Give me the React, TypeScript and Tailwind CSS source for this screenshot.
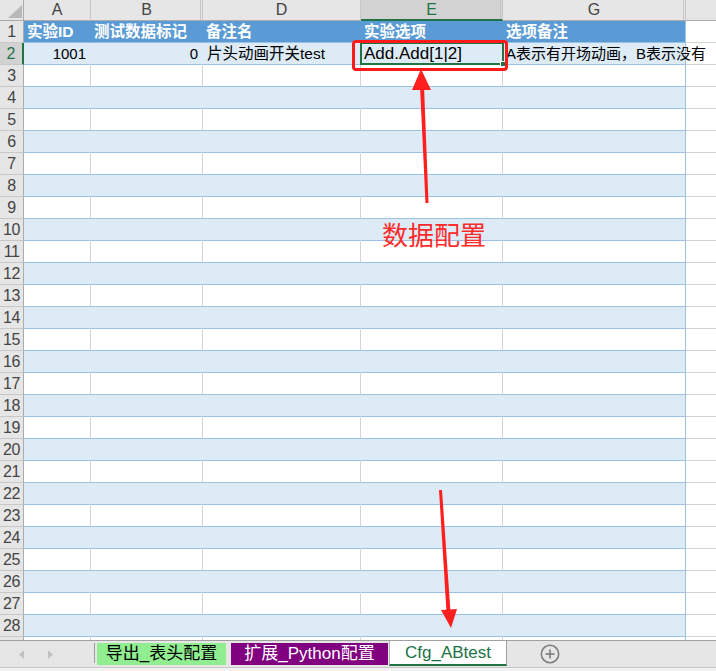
import React from 'react';

type ColDef = { key: string; w: string };

const COLS: ColDef[] = [
  { key: 'A', w: 'w-[67px]' },
  { key: 'B', w: 'w-[112px]' },
  { key: 'D', w: 'w-[158px]' },
  { key: 'E', w: 'w-[142px]' },
  { key: 'G', w: 'w-[183px]' },
];

const HEADERS = ['实验ID', '测试数据标记', '备注名', '实验选项', '选项备注'];

function ColHeader() {
  return (
    <div className="flex h-[21px] bg-[#e6e6e6] text-[16px] text-[#444]">
      <div className="relative w-[24px] h-[21px] border-r border-b border-[#ababab]">
        <svg className="absolute left-0 top-0" width="24" height="21">
          <polygon points="22,5 22,18 8,18" fill="#b8b8b8" />
        </svg>
      </div>
      <div className="w-[67px] h-[21px] border-r border-r-[#c6c6c6] border-b border-b-[#ababab] flex items-center justify-center">A</div>
      <div className="w-[112px] h-[21px] border-r border-r-[#c6c6c6] border-b border-b-[#ababab] flex items-center justify-center shadow-[inset_-1px_0_0_#e6e6e6,inset_-2px_0_0_#c6c6c6]">B</div>
      <div className="w-[158px] h-[21px] border-r border-r-[#c6c6c6] border-b border-b-[#ababab] flex items-center justify-center">D</div>
      <div className="w-[142px] h-[21px] bg-[#d2d2d2] text-[#217346] border-r border-r-[#c6c6c6] border-b-2 border-b-[#217346] flex items-center justify-center shadow-[inset_-1px_0_0_#d2d2d2,inset_-2px_0_0_#c6c6c6]">E</div>
      <div className="w-[183px] h-[21px] border-r border-r-[#c6c6c6] border-b border-b-[#ababab] flex items-center justify-center shadow-[inset_-1px_0_0_#e6e6e6,inset_-2px_0_0_#c6c6c6]">G</div>
      <div className="flex-1 h-[21px] border-b border-b-[#ababab]" />
    </div>
  );
}

function RowHeader({ n, selected }: { n: number; selected?: boolean }) {
  if (selected) {
    return (
      <div className="w-[24px] h-[22px] bg-[#d2d2d2] border-r-2 border-r-[#217346] border-b border-b-[#c8c8c8] flex items-center justify-center text-[16px] text-[#217346] leading-none">
        {n}
      </div>
    );
  }
  return (
    <div className="w-[24px] h-[22px] bg-[#e6e6e6] border-r border-r-[#ababab] border-b border-b-[#c8c8c8] flex items-center justify-center text-[16px] text-[#444] leading-none tracking-[-0.5px] overflow-hidden">
      {n}
    </div>
  );
}

function HeaderRow() {
  return (
    <div className="flex h-[22px]">
      <RowHeader n={1} />
      {COLS.map((c, i) => (
        <div
          key={c.key}
          className={
            c.w +
            ' h-[22px] bg-[#5b9bd5] border-b border-b-[#9bc2e6] ' +
            (i === 4 ? 'border-r border-r-[#9bc2e6]' : 'border-r border-r-[#5b9bd5]') +
            ' pl-[3px] text-[15.5px] font-bold text-white leading-[21px] whitespace-nowrap overflow-hidden'
          }
        >
          {HEADERS[i]}
        </div>
      ))}
      <div className="flex-1 h-[22px] border-b border-b-[#d4d4d4] bg-white" />
    </div>
  );
}

function DataRow2() {
  const base = 'h-[22px] bg-[#ddebf7] border-b border-b-[#9bc2e6] border-r leading-[21px] whitespace-nowrap text-black';
  return (
    <div className="flex h-[22px]">
      <RowHeader n={2} selected />
      <div className={'w-[67px] ' + base + ' border-r-[#ddebf7] text-right pr-[4px] text-[15px]'}>1001</div>
      <div className={'w-[112px] ' + base + ' border-r-[#ddebf7] text-right pr-[4px] text-[15px]'}>0</div>
      <div className={'w-[158px] ' + base + ' border-r-[#ddebf7] pl-[4px] text-[15.5px] overflow-hidden'}>片头动画开关test</div>
      <div className={'w-[142px] ' + base + ' border-r-[#ddebf7] pl-[3px] text-[17px] overflow-hidden'}>Add.Add[1|2]</div>
      <div className={'w-[183px] ' + base + ' border-r-[#9bc2e6] pl-[3px] text-[15px] relative z-10'}>
        A表示有开场动画，B表示没有
      </div>
      <div className="flex-1 h-[22px] border-b border-b-[#d4d4d4] bg-white" />
    </div>
  );
}

function EmptyRow({ n }: { n: number }) {
  const even = n % 2 === 0;
  return (
    <div className="flex h-[22px]">
      <RowHeader n={n} />
      {COLS.map((c, i) => (
        <div
          key={c.key}
          className={
            c.w +
            ' h-[22px] border-b border-b-[#9bc2e6] border-r ' +
            (even ? 'bg-[#ddebf7] ' : 'bg-white ') +
            (i === 4 ? 'border-r-[#9bc2e6]' : even ? 'border-r-[#ddebf7]' : 'border-r-[#d4d4d4]')
          }
        />
      ))}
      <div className="flex-1 h-[22px] border-b border-b-[#d4d4d4] bg-white" />
    </div>
  );
}

function PartialRow() {
  return (
    <div className="flex h-[3px] overflow-hidden">
      <div className="w-[24px] h-[3px] bg-[#e6e6e6] border-r border-r-[#ababab]" />
      {COLS.map((c, i) => (
        <div
          key={c.key}
          className={c.w + ' h-[3px] bg-white border-r ' + (i === 4 ? 'border-r-[#9bc2e6]' : 'border-r-[#d4d4d4]')}
        />
      ))}
      <div className="flex-1 h-[3px] bg-white" />
    </div>
  );
}

function TabBar() {
  return (
    <div className="flex flex-col h-[31px]">
      <div className="flex h-[27px] bg-[#e6e6e6] border-t border-t-[#a0a0a0]">
        <div className="w-[94px] h-[26px] flex items-center">
          <svg width="94" height="26">
            <polygon points="24,9 24,18 19,13.5" fill="#c2c2c2" />
            <polygon points="48,9 48,18 53,13.5" fill="#c2c2c2" />
          </svg>
        </div>
        <div className="w-px h-[20px] mt-[2px] bg-[#9e9e9e]" />
        <div className="ml-[2px] mt-[2px] h-[22px] w-[129px] bg-[#90ee90] flex items-center justify-center text-[17px] text-black whitespace-nowrap">
          导出_表头配置
        </div>
        <div className="ml-[5px] mt-[2px] h-[22px] w-[157px] bg-[#800080] flex items-center justify-center text-[17px] text-white whitespace-nowrap">
          扩展_Python配置
        </div>
        <div className="ml-[1px] h-[25px] w-[118px] bg-white border-l border-r border-l-[#b0b0b0] border-r-[#a0a0a0] border-b-2 border-b-[#217346] flex items-center justify-center text-[17px] text-[#217346] whitespace-nowrap">
          Cfg_ABtest
        </div>
        <div className="ml-[32px] h-[26px] flex items-center">
          <svg width="22" height="22" viewBox="0 0 22 22">
            <circle cx="11" cy="11" r="8.7" fill="none" stroke="#7a7a7a" strokeWidth="1.5" />
            <line x1="6.5" y1="11" x2="15.5" y2="11" stroke="#7a7a7a" strokeWidth="1.6" />
            <line x1="11" y1="6.5" x2="11" y2="15.5" stroke="#7a7a7a" strokeWidth="1.6" />
          </svg>
        </div>
      </div>
      <div className="h-px bg-[#c8c8c8]" />
      <div className="flex-1 bg-[#f2f2f2]" />
    </div>
  );
}

export default function App() {
  const rows: number[] = [];
  for (let i = 3; i <= 28; i++) rows.push(i);
  return (
    <div className="relative w-[716px] h-[671px] overflow-hidden bg-white font-[family-name:'Liberation_Sans','Noto_Sans_CJK_SC',sans-serif]">
      <div className="flex flex-col">
        <ColHeader />
        <HeaderRow />
        <DataRow2 />
        {rows.map((n) => (
          <EmptyRow key={n} n={n} />
        ))}
        <PartialRow />
      </div>
      <TabBar />

      {/* selection frame on E2 */}
      <div className="absolute left-[360px] top-[42px] w-[144px] h-[23px] border-2 border-[#217346] z-20" />
      <div className="absolute left-[500px] top-[61px] w-[6px] h-[6px] bg-[#217346] border border-white z-20" />

      {/* red annotation box */}
      <div className="absolute left-[352px] top-[40px] w-[156px] h-[31px] border-[3px] border-[#ff1a1a] rounded-[4px] z-30" />

      {/* annotation text */}
      <div className="absolute left-[382px] top-[223px] text-[26px] leading-none text-[#ff2b2b] whitespace-nowrap z-30">
        数据配置
      </div>

      {/* arrows */}
      <svg className="absolute left-0 top-0 z-30 pointer-events-none" width="716" height="671">
        <polygon points="420,86 424,86 428.5,203 425.5,203" fill="#ff1f1f" />
        <polygon points="421,69 431,90 412,90" fill="#ff1f1f" />
        <polygon points="439,490 442,490 450.5,612 446.5,612" fill="#ff1f1f" />
        <polygon points="451,628 441,610 457,609" fill="#ff1f1f" />
      </svg>
    </div>
  );
}
